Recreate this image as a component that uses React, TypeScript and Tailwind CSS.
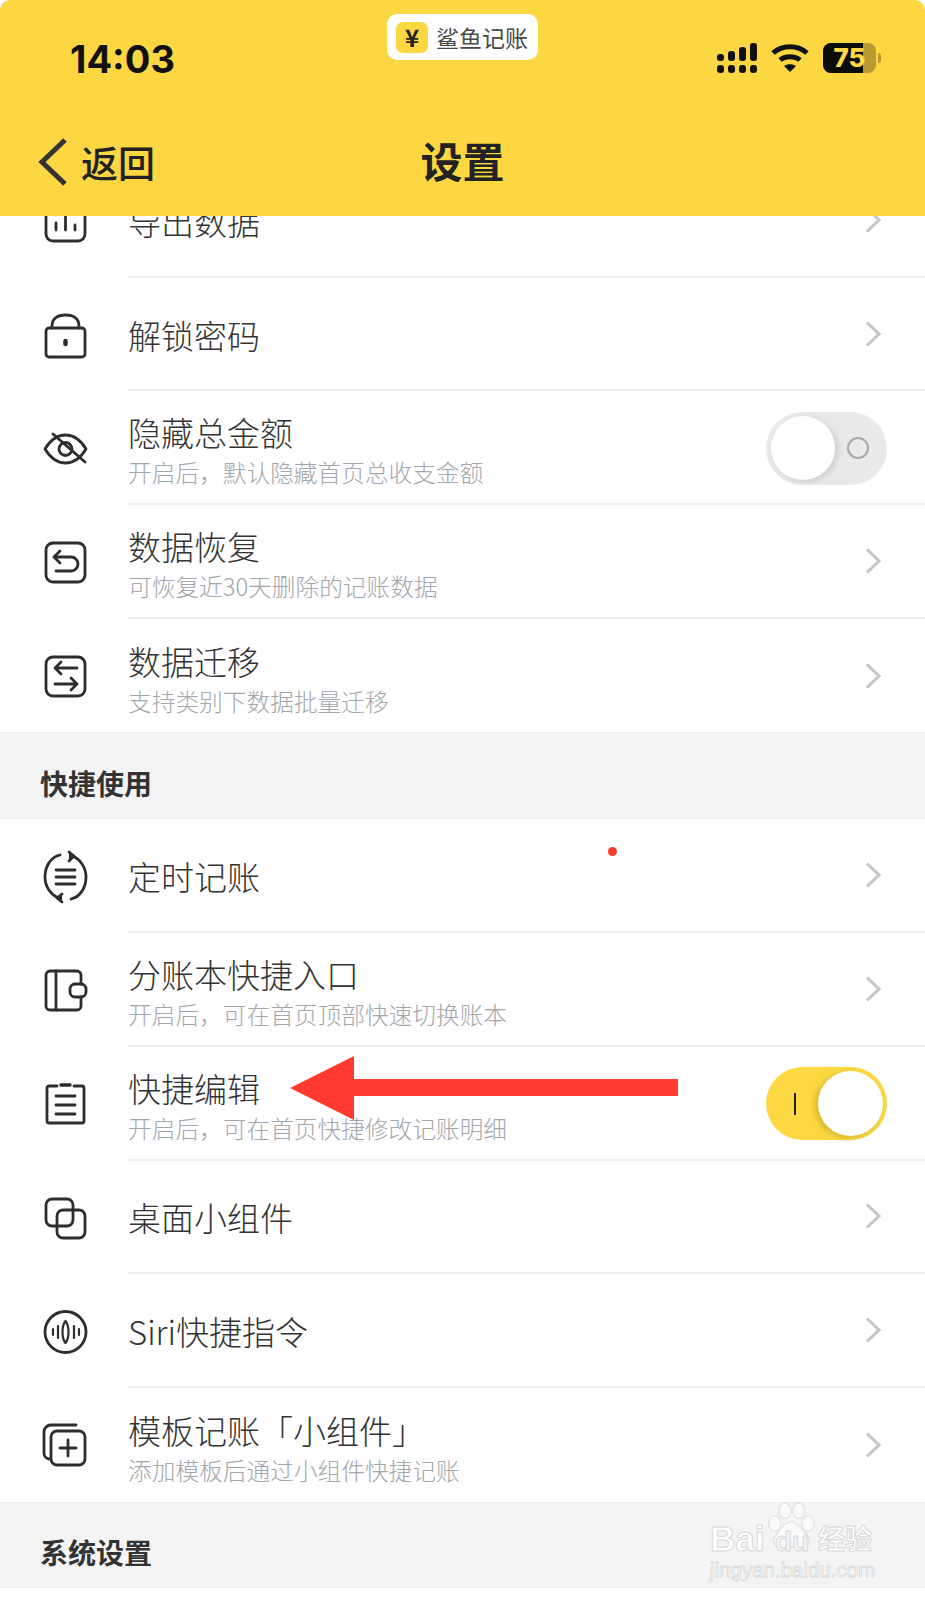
import type { ReactNode } from 'react';

const STROKE = '#2d2d2d';

function IconBox({ children }: { children: ReactNode }) {
  return (
    <svg
      width="42"
      height="42"
      viewBox="0 0 42 42"
      fill="none"
      stroke={STROKE}
      strokeWidth="2.8"
      strokeLinecap="round"
      strokeLinejoin="round"
      className="overflow-visible flex-shrink-0"
    >
      {children}
    </svg>
  );
}

const ICONS: Record<string, ReactNode> = {
  export: (
    <IconBox>
      <path d="M1 6V33a7 7 0 0 0 7 7H33a7 7 0 0 0 7-7V6M7 1H34" />
      <path d="M11 22V29M20.5 12V29M30 24V29" />
    </IconBox>
  ),
  lock: (
    <IconBox>
      <rect x="1" y="13" width="39" height="29" rx="3" />
      <path d="M7 13V11C7 4 12 0 20.5 0S34 4 34 11V13" />
      <path d="M20.5 26V29" strokeWidth="4.5" />
    </IconBox>
  ),
  eye: (
    <IconBox>
      <path d="M0 21C6 11 13 7 20.5 7S35 11 41 21C35 31 28 35 20.5 35S6 31 0 21Z" />
      <circle cx="20.5" cy="21" r="6.5" />
      <path d="M8 6L40 34" />
    </IconBox>
  ),
  restore: (
    <IconBox>
      <rect x="1" y="1" width="39" height="39" rx="7" />
      <path d="M15 9L9 15L15 21M9 15H26A7 7 0 0 1 26 29H11" />
    </IconBox>
  ),
  migrate: (
    <IconBox>
      <rect x="1" y="1" width="39" height="39" rx="7" />
      <path d="M16 6L10 12L16 18M10 12H32M26 22L32 28L26 34M32 28H10" />
    </IconBox>
  ),
  schedule: (
    <IconBox>
      <path d="M15 -1C6 1 0 10 0 21C0 30 5 38 13 42" />
      <path d="M26 43C35 41 41 32 41 21C41 12 36 4 28 0" />
      <path d="M24 -4L29 0L24 5" fill={STROKE} />
      <path d="M17 38L12 42L17 46" fill={STROKE} />
      <path d="M11 14H30M11 21H30M11 28H30" />
    </IconBox>
  ),
  wallet: (
    <IconBox>
      <path d="M36 14V5a4 4 0 0 0-4-4H5a4 4 0 0 0-4 4V36a4 4 0 0 0 4 4H32a4 4 0 0 0 4-4V27" />
      <path d="M11 1V40" />
      <rect x="25" y="14" width="16" height="13" rx="5" />
    </IconBox>
  ),
  notes: (
    <IconBox>
      <path d="M12 2H4a2 2 0 0 0-2 2V37a2 2 0 0 0 2 2H37a2 2 0 0 0 2-2V4a2 2 0 0 0-2-2H29" />
      <path d="M16 1H25" strokeWidth="3.5" />
      <path d="M11 12H30M11 21H30M11 30H30" />
    </IconBox>
  ),
  copy: (
    <IconBox>
      <rect x="1" y="2" width="27" height="27" rx="6" />
      <rect x="12" y="13" width="28" height="28" rx="6" />
    </IconBox>
  ),
  siri: (
    <IconBox>
      <circle cx="20.5" cy="21" r="20.5" />
      <path d="M8 18V24M13 15V27M29 15V27M34 18V24" strokeWidth="2.2" />
      <path d="M20.5 10C18 13 17.5 17 17.5 21S18 29 20.5 32C23 29 23.5 25 23.5 21S23 13 20.5 10Z" strokeWidth="2.2" />
    </IconBox>
  ),
  plus: (
    <IconBox>
      <path d="M31 0H6a7 7 0 0 0-7 7V28a6 6 0 0 0 5 6" />
      <rect x="6" y="6" width="34" height="34" rx="6" />
      <path d="M23 15V31M15 23H31" />
    </IconBox>
  ),
};

function Chevron() {
  return (
    <svg width="16" height="26" viewBox="0 0 16 26" fill="none" stroke="#c6c6c6" strokeWidth="3" className="flex-shrink-0">
      <path d="M2 1.5L14 13L2 24.5" />
    </svg>
  );
}

function Toggle({ on }: { on: boolean }) {
  if (on) {
    return (
      <div className="flex items-center w-[121px] h-[73px] rounded-full bg-[#fdd843] pl-[28px] pr-[4px] justify-between flex-shrink-0">
        <div className="w-[2px] h-[22px] bg-[#222]" />
        <div className="w-[65px] h-[65px] rounded-full bg-white shadow-[-3px_2px_6px_rgba(120,100,0,0.3)]" />
      </div>
    );
  }
  return (
    <div className="flex items-center w-[121px] h-[73px] rounded-full bg-[#e9e9e9] pl-[5px] pr-[18px] justify-between flex-shrink-0">
      <div className="w-[64px] h-[64px] rounded-full bg-white shadow-[3px_2px_6px_rgba(0,0,0,0.12)]" />
      <div className="w-[22px] h-[22px] rounded-full border-2 border-[#a8a8a8]" />
    </div>
  );
}

function Row({
  icon,
  title,
  sub,
  toggle,
  last,
}: {
  icon: string;
  title: string;
  sub?: string;
  toggle?: 'on' | 'off';
  last?: boolean;
}) {
  return (
    <div className="flex h-[113.7px] bg-white">
      <div className="w-[128px] pl-[45px] flex items-center flex-shrink-0 pt-[2px]">{ICONS[icon]}</div>
      <div className={`flex-1 flex items-center pr-[38px] ${last ? '' : 'border-b-2 border-[#f0f0f0]'}`}>
        <div className={`flex-1 min-w-0 ${sub ? 'pt-[10px]' : 'pt-[2px]'}`}>
          <div className="text-[33px] leading-[40px] font-light text-[#333]">{title}</div>
          {sub && <div className="text-[23.7px] leading-[40px] font-light text-[#a2a7ab]">{sub}</div>}
        </div>
        {toggle ? (
          <div className="pt-[2px]">
            <Toggle on={toggle === 'on'} />
          </div>
        ) : (
          <div className="pr-[6px]">
            <Chevron />
          </div>
        )}
      </div>
    </div>
  );
}

function Section({ title, height }: { title: string; height: string }) {
  return (
    <div className={`flex items-center pl-[40px] pt-[14px] bg-[#f4f4f4] border-y border-[#ececec] ${height}`}>
      <span className="text-[28px] font-bold text-[#333]">{title}</span>
    </div>
  );
}

function StatusIcons() {
  return (
    <div className="flex items-center justify-end gap-[14px]">
      <svg width="40" height="30" viewBox="0 0 40 30" fill="#111">
        <rect x="0" y="11" width="7" height="7" rx="3" />
        <rect x="11" y="8" width="7" height="10" rx="3" />
        <rect x="22" y="4" width="7" height="14" rx="3" />
        <rect x="33" y="0" width="7" height="18" rx="3" />
        <rect x="0" y="22" width="7" height="8" rx="3" />
        <rect x="11" y="22" width="7" height="8" rx="3" />
        <rect x="22" y="22" width="7" height="8" rx="3" />
        <rect x="33" y="22" width="7" height="8" rx="3" />
      </svg>
      <svg width="38" height="28" viewBox="0 0 38 28" fill="none" stroke="#111" strokeWidth="5">
        <path d="M2 9C11 0.5 27 0.5 36 9" />
        <path d="M9 16C14 11.5 24 11.5 29 16" />
        <path d="M19 28L13 22C16 19.5 22 19.5 25 22Z" fill="#111" stroke="none" />
      </svg>
      <div className="flex items-center gap-[2px]">
        <div className="relative flex items-center w-[53px] h-[30px] rounded-[8px] overflow-hidden bg-[#b99a33]">
          <div className="absolute left-0 top-0 bottom-0 w-[40px] bg-[#0b0b0b]" />
          <span className="relative w-full text-center font-['Inter',sans-serif] font-extrabold text-[26px] leading-none text-[#fdd843]">
            75
          </span>
        </div>
        <div className="w-[3px] h-[10px] rounded-r-full bg-[#b99a33]" />
      </div>
    </div>
  );
}

function Header() {
  return (
    <header className="relative z-10 h-[216px] bg-[#fdd741] rounded-t-[10px]">
      <div className="grid grid-cols-[1fr_151px_1fr] items-start h-[100px] pl-[70px] pr-[44px]">
        <span className="mt-[37px] font-['Inter',sans-serif] font-bold text-[38px] leading-[44px] text-[#111]">14:03</span>
        <div className="-ml-[13px] mt-[14px] flex items-center gap-[8px] w-[151px] h-[46px] pl-[9px] rounded-[10px] bg-white">
          <div className="flex items-center justify-center w-[32px] h-[31px] rounded-[7px] bg-[#fdd741] text-[24px] font-bold text-[#222]">
            ¥
          </div>
          <span className="text-[23px] leading-none font-normal text-[#4a4a4a]">鲨鱼记账</span>
        </div>
        <div className="mt-[43px]">
          <StatusIcons />
        </div>
      </div>
      <div className="relative flex items-center justify-center h-[116px] pt-[4px]">
        <div className="absolute left-[38px] top-[38px] flex items-center gap-[13px]">
          <svg width="30" height="48" viewBox="0 0 30 48" fill="none" stroke="#333" strokeWidth="5">
            <path d="M27 2L4 24L27 46" />
          </svg>
          <span className="text-[37px] font-medium leading-none text-[#222]">返回</span>
        </div>
        <h1 className="text-[42px] font-bold leading-none text-[#222]">设置</h1>
      </div>
    </header>
  );
}

function Annotations() {
  return (
    <>
      <div className="absolute left-[608px] top-[847px] w-[9px] h-[9px] rounded-full bg-[#ff3b30]" />
      <svg
        className="absolute left-[290px] top-[1056px]"
        width="390"
        height="65"
        viewBox="0 0 390 65"
        fill="#ff3b30"
      >
        <polygon points="0,32 64,0 64,23 388,23 388,40 64,40 64,64" />
      </svg>
    </>
  );
}

function Watermark() {
  return (
    <div className="absolute left-[708px] top-[1500px] w-[172px] h-[84px] select-none whitespace-nowrap font-['Liberation_Sans',sans-serif] text-white">
      <svg className="absolute left-[59px] top-[1px]" width="48" height="52" viewBox="0 0 56 56" fill="#fafafa" stroke="#e2e2e2" strokeWidth="1.5">
        <ellipse cx="9" cy="24" rx="7" ry="9" />
        <ellipse cx="21" cy="9" rx="7" ry="9" />
        <ellipse cx="37" cy="9" rx="7" ry="9" />
        <ellipse cx="48" cy="24" rx="7" ry="9" />
        <path d="M28 22C20 22 14 32 9 40C5 48 12 54 20 52C26 50 32 50 38 52C46 54 52 48 48 40C43 32 36 22 28 22Z" />
      </svg>
      <span className="absolute left-[2px] top-[21px] text-[35px] font-bold leading-none [-webkit-text-stroke:1px_#d8d8d8]">
        Bai
      </span>
      <span className="absolute left-[67px] top-[28px] text-[28px] font-bold leading-none text-[#f4f4f4] [-webkit-text-stroke:1px_#d8d8d8]">
        du
      </span>
      <span className="absolute left-[110px] top-[22px] font-['Noto_Sans_CJK_SC',sans-serif] text-[27px] font-bold leading-[32px] [-webkit-text-stroke:1px_#d8d8d8]">
        经验
      </span>
      <span className="absolute left-[2px] top-[60px] text-[20.5px] leading-none [-webkit-text-stroke:1px_#dcdcdc]">
        jingyan.baidu.com
      </span>
    </div>
  );
}

export default function App() {
  return (
    <div className="relative w-[925px] h-[1600px] overflow-hidden bg-white font-['Noto_Sans_CJK_SC','Noto_Sans',sans-serif]">
      <Header />
      <div className="-mt-[52px]">
        <Row icon="export" title="导出数据" />
        <Row icon="lock" title="解锁密码" />
        <Row icon="eye" title="隐藏总金额" sub="开启后，默认隐藏首页总收支金额" toggle="off" />
        <Row icon="restore" title="数据恢复" sub="可恢复近30天删除的记账数据" />
        <Row icon="migrate" title="数据迁移" sub="支持类别下数据批量迁移" last />
      </div>
      <Section title="快捷使用" height="h-[87px]" />
      <Row icon="schedule" title="定时记账" />
      <Row icon="wallet" title="分账本快捷入口" sub="开启后，可在首页顶部快速切换账本" />
      <Row icon="notes" title="快捷编辑" sub="开启后，可在首页快捷修改记账明细" toggle="on" />
      <Row icon="copy" title="桌面小组件" />
      <Row icon="siri" title="Siri快捷指令" />
      <Row icon="plus" title="模板记账「小组件」" sub="添加模板后通过小组件快捷记账" last />
      <Section title="系统设置" height="h-[86px]" />
      <Annotations />
      <Watermark />
    </div>
  );
}
